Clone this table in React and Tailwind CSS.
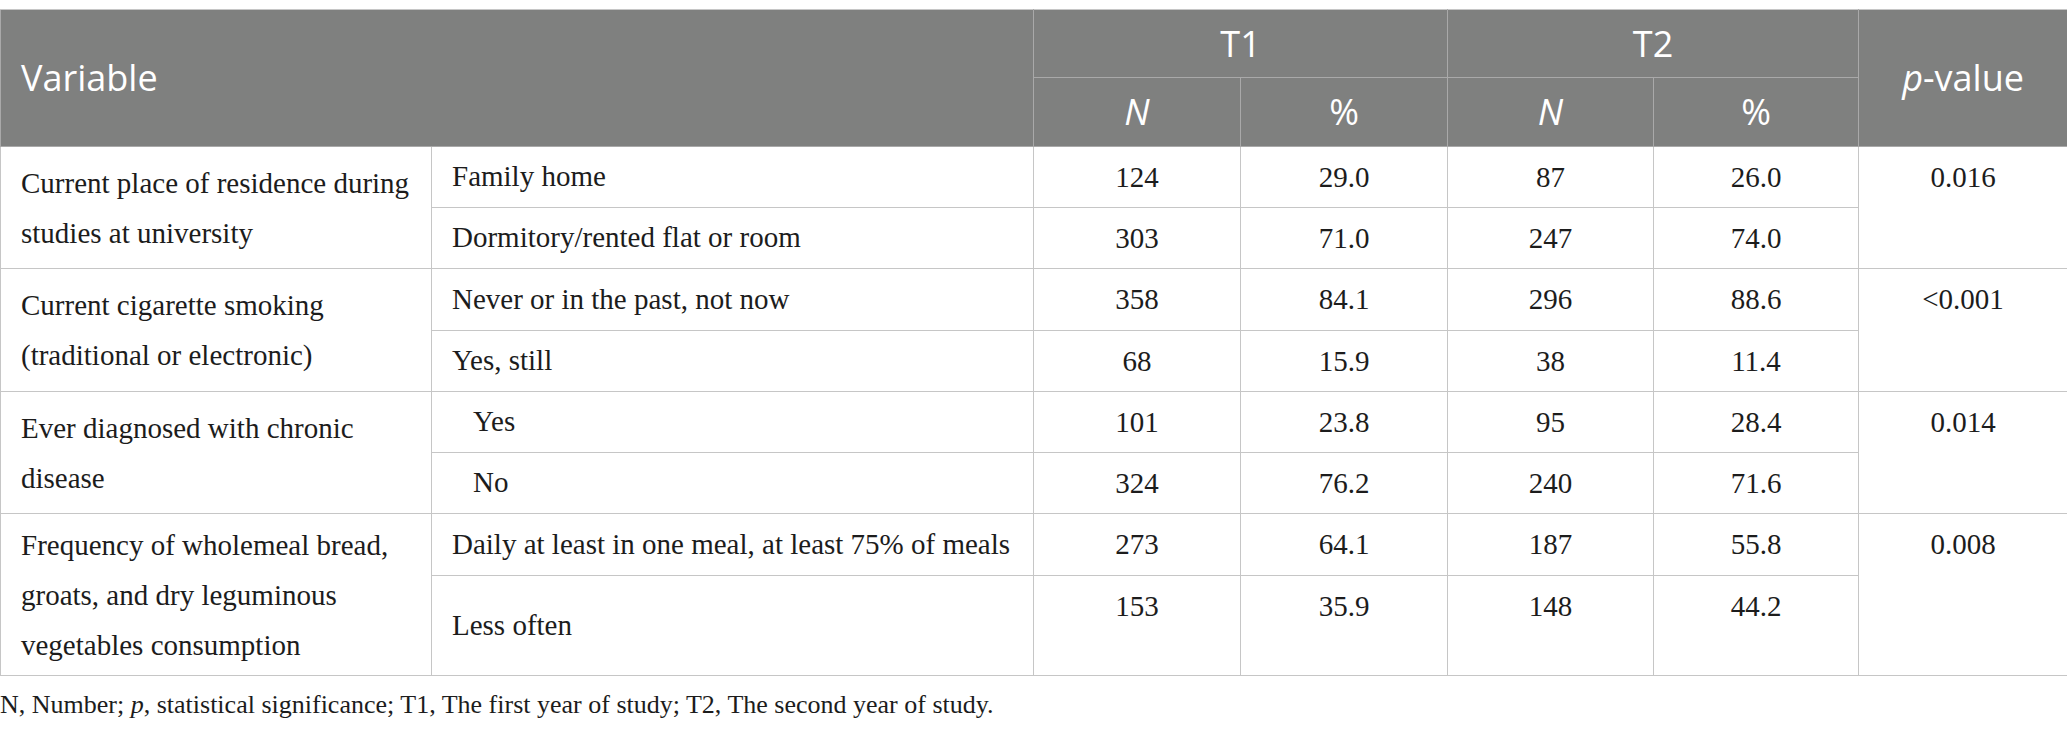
import React from "react";

const groups = [
  {
    label: ["Current place of residence during", "studies at university"],
    p: "0.016",
    subs: [
      { t: "Family home", v: ["124", "29.0", "87", "26.0"], h: "h-[61px]", indent: false },
      { t: "Dormitory/rented flat or room", v: ["303", "71.0", "247", "74.0"], h: "h-[61px]", indent: false },
    ],
  },
  {
    label: ["Current cigarette smoking", "(traditional or electronic)"],
    p: "<0.001",
    subs: [
      { t: "Never or in the past, not now", v: ["358", "84.1", "296", "88.6"], h: "h-[62px]", indent: false },
      { t: "Yes, still", v: ["68", "15.9", "38", "11.4"], h: "h-[61px]", indent: false },
    ],
  },
  {
    label: ["Ever diagnosed with chronic", "disease"],
    p: "0.014",
    subs: [
      { t: "Yes", v: ["101", "23.8", "95", "28.4"], h: "h-[61px]", indent: true },
      { t: "No", v: ["324", "76.2", "240", "71.6"], h: "h-[61px]", indent: true },
    ],
  },
  {
    label: ["Frequency of wholemeal bread,", "groats, and dry leguminous", "vegetables consumption"],
    p: "0.008",
    subs: [
      { t: "Daily at least in one meal, at least 75% of meals", v: ["273", "64.1", "187", "55.8"], h: "h-[62px]", indent: false },
      { t: "Less often", v: ["153", "35.9", "148", "44.2"], h: "h-[100px]", indent: false },
    ],
  },
];

const td = "border border-[#c6c6c6]";
const th = "border border-[#a9a9a9] font-normal";

export default function App() {
  return (
    <div className="w-[2067px] h-[731px] bg-white pt-[9px] overflow-hidden">
      <table className="table-fixed border-collapse w-[2067px] font-['Liberation_Serif','Times_New_Roman',serif] text-[29px] text-[#1c1c1c]">
        <colgroup>
          <col className="w-[431px]" />
          <col className="w-[602px]" />
          <col className="w-[207px]" />
          <col className="w-[207px]" />
          <col className="w-[206px]" />
          <col className="w-[205px]" />
          <col className="w-[209px]" />
        </colgroup>
        <thead className="bg-[#7f807f] text-white font-['Open_Sans','Noto_Sans',sans-serif] text-[36px]">
          <tr className="h-[68px]">
            <th colSpan={2} rowSpan={2} className={`${th} border-t-[#c6c6c6] text-left align-middle pl-[20px]`}>
              Variable
            </th>
            <th colSpan={2} className={`${th} border-t-[#c6c6c6] text-center align-middle`}>T1</th>
            <th colSpan={2} className={`${th} border-t-[#c6c6c6] text-center align-middle`}>T2</th>
            <th rowSpan={2} className={`${th} border-t-[#c6c6c6] text-center align-middle`}>
              <span className="italic">p</span>-value
            </th>
          </tr>
          <tr className="h-[69px]">
            <th className={`${th} text-center align-middle italic`}>N</th>
            <th className={`${th} text-center align-middle`}>%</th>
            <th className={`${th} text-center align-middle italic`}>N</th>
            <th className={`${th} text-center align-middle`}>%</th>
          </tr>
        </thead>
        <tbody>
          {groups.map((g, gi) =>
            g.subs.map((s, si) => (
              <tr key={`${gi}-${si}`} className={s.h}>
                {si === 0 && (
                  <td rowSpan={2} className={`${td} align-middle text-left pl-[20px] pr-2 leading-[50px]`}>
                    {g.label.map((l, li) => (
                      <React.Fragment key={li}>
                        {li > 0 && <br />}
                        {l}
                      </React.Fragment>
                    ))}
                  </td>
                )}
                <td className={`${td} align-middle text-left whitespace-nowrap ${s.indent ? "pl-[41px]" : "pl-[20px]"}`}>
                  {s.t}
                </td>
                {s.v.map((v, vi) => (
                  <td key={vi} className={`${td} align-top text-center pt-[9px]`}>
                    {v}
                  </td>
                ))}
                {si === 0 && (
                  <td rowSpan={2} className={`${td} align-top text-center pt-[9px]`}>
                    {g.p}
                  </td>
                )}
              </tr>
            ))
          )}
        </tbody>
      </table>
      <p className="mt-[14px] font-['Liberation_Serif','Times_New_Roman',serif] text-[26px] text-[#1c1c1c] leading-[1.15]">
        N, Number; <span className="italic">p</span>, statistical significance; T1, The first year of study; T2, The second year of study.
      </p>
    </div>
  );
}
